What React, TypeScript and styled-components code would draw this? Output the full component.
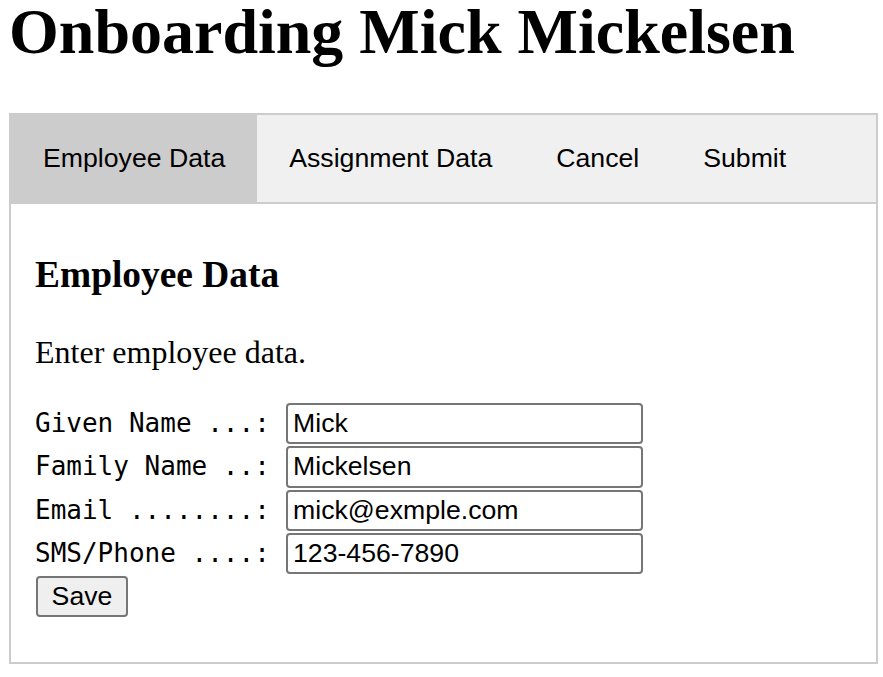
import React from "react";
import styled, { createGlobalStyle } from "styled-components";

const Global = createGlobalStyle`
  html, body { margin: 0; padding: 0; background: #fff; }
  body { font-family: "Liberation Serif", "Times New Roman", serif; color: #000; }
`;

const Page = styled.div`
  padding: 0 5px 0 9px;
`;

const Title = styled.h1`
  margin: 0 0 49px;
  font-family: "Liberation Serif", "Times New Roman", serif;
  font-weight: bold;
  font-size: 64px;
  line-height: 64px;
  white-space: nowrap;
`;

const Panel = styled.section`
  border: 2px solid #ccc;
`;

const TabBar = styled.nav`
  display: flex;
  background: #f0f0f0;
  border-bottom: 2px solid #ccc;
`;

const Tab = styled.button<{ $active?: boolean }>`
  appearance: none;
  border: none;
  margin: 0;
  height: 87px;
  box-sizing: border-box;
  padding: 28px 32px 28px;
  background: ${(p) => (p.$active ? "#ccc" : "transparent")};
  font-family: "Liberation Sans", Arial, sans-serif;
  font-size: 26.67px;
  line-height: 31px;
  color: #000;
  cursor: pointer;
`;

const Content = styled.div`
  padding: 50px 24px 45px;
`;

const Heading = styled.h3`
  margin: 0 0 38px;
  font-family: "Liberation Serif", "Times New Roman", serif;
  font-weight: bold;
  font-size: 37.44px;
  line-height: 42px;
`;

const Lead = styled.p`
  margin: 0 0 33px;
  font-size: 32px;
  line-height: 36px;
`;

const Form = styled.form`
  display: flex;
  flex-direction: column;
  align-items: flex-start;
  gap: 2px;
`;

const Row = styled.div`
  display: flex;
  align-items: baseline;
`;

const Label = styled.label`
  width: 251px;
  font-family: "DejaVu Sans Mono", monospace;
  font-size: 26px;
  white-space: pre;
`;

const Input = styled.input`
  box-sizing: border-box;
  width: 357px;
  height: 41.33px;
  margin: 0;
  padding: 0 5px;
  border: 2px solid #767676;
  border-radius: 4px;
  font-family: "Liberation Sans", Arial, sans-serif;
  font-size: 26.67px;
  color: #000;
  background: #fff;
`;

const SaveButton = styled.button`
  box-sizing: border-box;
  width: 92px;
  height: 41px;
  margin: 0 0 0 1px;
  padding: 0;
  border: 2px solid #767676;
  border-radius: 4px;
  background: #efefef;
  font-family: "Liberation Sans", Arial, sans-serif;
  font-size: 26.67px;
  color: #000;
`;

const fields = [
  { label: "Given Name ...:", value: "Mick" },
  { label: "Family Name ..:", value: "Mickelsen" },
  { label: "Email ........:", value: "mick@exmple.com" },
  { label: "SMS/Phone ....:", value: "123-456-7890" },
];

export default function App() {
  return (
    <>
      <Global />
      <Page>
        <Title>Onboarding Mick Mickelsen</Title>
        <Panel>
          <TabBar>
            <Tab $active>Employee Data</Tab>
            <Tab>Assignment Data</Tab>
            <Tab>Cancel</Tab>
            <Tab>Submit</Tab>
          </TabBar>
          <Content>
            <Heading>Employee Data</Heading>
            <Lead>Enter employee data.</Lead>
            <Form onSubmit={(e) => e.preventDefault()}>
              {fields.map((f) => (
                <Row key={f.label}>
                  <Label>{f.label}</Label>
                  <Input defaultValue={f.value} />
                </Row>
              ))}
              <SaveButton type="submit">Save</SaveButton>
            </Form>
          </Content>
        </Panel>
      </Page>
    </>
  );
}
